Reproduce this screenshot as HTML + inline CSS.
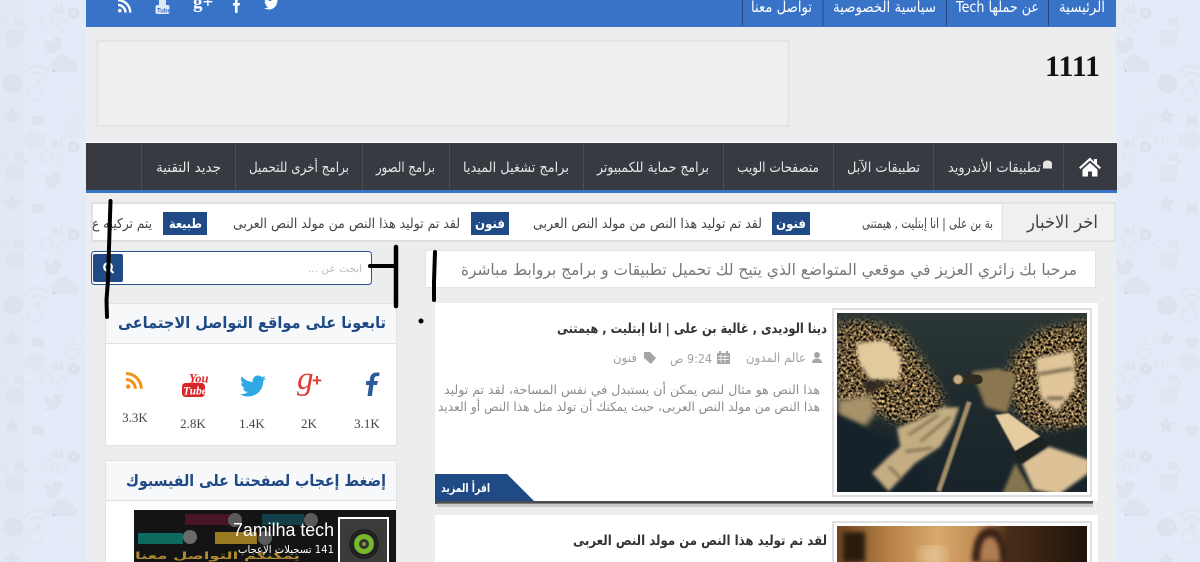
<!DOCTYPE html>
<html lang="ar"><head><meta charset="utf-8"><title>1111</title>
<style>
html,body{margin:0;padding:0;width:1200px;height:562px;overflow:hidden;background:#e3ebf7}
svg{display:block;position:absolute;left:0;top:0}
text{font-family:"DejaVu Sans","Liberation Sans",sans-serif}
.r{direction:rtl;text-anchor:start}
.top{fill:#fff;font-size:15px}
.nav{fill:#e6e6e6;font-size:14px}
.tk{fill:#444;font-size:13.500px}
.tag{fill:#fff;font-size:13px;font-weight:bold}
.wt{fill:#1f4a85;font-size:16px;font-weight:bold}
.ct{fill:#444;font-family:"Liberation Serif",serif;font-size:13px;text-anchor:middle}
.pt{fill:#333;font-size:13.500px;font-weight:bold}
.mt{fill:#a0a0a0;font-size:12.500px}
.ex{fill:#8c8c8c;font-size:12.500px}
</style></head>
<body>
<svg width="1200" height="562" viewBox="0 0 1200 562" xmlns="http://www.w3.org/2000/svg">
<defs>
<path id="tw" d="M23.95 4.57a10 10 0 0 1-2.82.78 4.96 4.96 0 0 0 2.16-2.72 9.900 9.900 0 0 1-3.13 1.19 4.920 4.920 0 0 0-8.38 4.480A13.980 13.980 0 0 1 1.640 3.160a4.920 4.920 0 0 0 1.520 6.570 4.900 4.900 0 0 1-2.230-.62v.06a4.920 4.920 0 0 0 3.950 4.830 5 5 0 0 1-2.210.08 4.940 4.940 0 0 0 4.600 3.420A9.870 9.870 0 0 1 0 19.540a13.940 13.940 0 0 0 7.550 2.210c9.050 0 14-7.500 14-13.980 0-.21 0-.42-.02-.63A9.940 9.940 0 0 0 24 4.590z"/>
<path id="fb" d="M9 24V13H6V9h3V6c0-3.500 2-5.500 5-5.500 1.500 0 3 .2 3 .2v3.400h-1.700C13.600 4.100 13 5.200 13 6.300V9h3.700l-.6 4H13v11z"/>
<g id="rss"><circle cx="3.200" cy="20.800" r="3.200"/><path d="M0 8.500v4.300c6.200 0 11.200 5 11.200 11.200h4.300C15.500 15.400 8.600 8.500 0 8.500z"/><path d="M0 0v4.300C10.900 4.300 19.700 13.100 19.700 24H24C24 10.700 13.300 0 0 0z"/></g>
<path id="cloud" d="M4 18a6 6 0 0 1 1-11.500A8 8 0 0 1 19 4a6.500 6.500 0 0 1 6 6 4.200 4.200 0 0 1 0 8z"/>
<path id="star" d="M9 0l2.600 6.200 6.400.5-4.900 4.200 1.500 6.600L9 14l-5.600 3.500 1.500-6.600L0 6.700l6.400-.5z"/>
<g id="bars"><rect x="0" y="6" width="2" height="6"/><rect x="3" y="3" width="2" height="9"/><rect x="6" y="5" width="2" height="7"/><rect x="9" y="0" width="2" height="12"/></g>
<g id="comp"><circle cx="6" cy="6" r="6"/><path d="M9 3L7 7 3 9l2-4z" fill="#e3ebf7"/></g>
<path id="heart" d="M6 10.500C2 7.500 0 5.500 0 3.200A3 3 0 0 1 6 2a3 3 0 0 1 6 1.200c0 2.300-2 4.300-6 7.300z"/>
<g id="bub"><ellipse cx="10" cy="9.500" rx="10" ry="9.500"/><circle cx="6" cy="9.500" r="1" fill="#e3ebf7"/><circle cx="10" cy="9.500" r="1" fill="#e3ebf7"/><circle cx="14" cy="9.500" r="1" fill="#e3ebf7"/></g>
<g id="patA0">
<use href="#bars" x="52" y="2" fill="#d9e1ec"/>
<use href="#comp" x="67.500" y="7" fill="#d6dee8"/>
<use href="#tw" transform="translate(43 35) scale(.85)" fill="#d9e1ec"/>
<use href="#cloud" x="50" y="54" fill="#d9e2ed"/>
<circle cx="47" cy="22" r="6" fill="none" stroke="#dde5f1" stroke-width="2"/><circle cx="62" cy="25" r="5" fill="none" stroke="#dde5f1" stroke-width="2"/>
<circle cx="54" cy="71" r=".8" fill="#6ea0dc"/>
<rect x="60" y="88" width="11" height="12" fill="none" stroke="#dbe3ee"/>
</g>
<g id="patA1">
<circle cx="64" cy="120" r="4" fill="none" stroke="#dbe3ee"/>
<circle cx="78" cy="118" r="5" fill="none" stroke="#dbe3ee"/>
<use href="#heart" x="66" y="127" fill="none" stroke="#d9e1ec"/>
<use href="#bars" x="52" y="136" fill="#d9e1ec"/>
<use href="#comp" x="67.500" y="141" fill="#d6dee8"/>
<use href="#tw" transform="translate(43 170) scale(.85)" fill="#d9e1ec"/>
<circle cx="47" cy="157" r="6" fill="none" stroke="#dde5f1" stroke-width="2"/><circle cx="62" cy="160" r="5" fill="none" stroke="#dde5f1" stroke-width="2"/>
</g>
<g id="patB0">
<rect x="6" y="30" width="17" height="17" rx="4" fill="#dbe3ee"/>
<circle cx="4" cy="22" r="3.500" fill="none" stroke="#dbe3ee"/>
<rect x="14" y="18" width="10" height="8" fill="#dbe3ee"/>
<path d="M26 72a14 14 0 0 1 23 0M30 77a9 9 0 0 1 15 0" stroke="#dbe3ee" stroke-width="2.500" fill="none"/><circle cx="38" cy="82" r="3" fill="#dbe3ee"/>
<circle cx="35" cy="93" r="7" fill="none" stroke="#dbe3ee" stroke-width="1.500"/>
<use href="#bub" x="3" y="74" fill="#d6dfea"/>
<path d="M28 25q-5 2-5 6" stroke="#d9e1ec" stroke-width="2" fill="none"/>
</g>
<g id="patB1">
<use href="#star" x="3" y="107" fill="#d7dfea"/>
<rect x="32" y="116" width="12" height="9" rx="1" fill="#d9e1ec"/>
<path d="M2 134v12M8 134v12M14 134v12" stroke="#dde5f0" stroke-width="2"/>
<ellipse cx="35" cy="140" rx="11" ry="9" fill="#dde5f0"/>
<rect x="6" y="165" width="17" height="17" rx="4" fill="#dbe3ee"/>
<circle cx="4" cy="157" r="3.500" fill="none" stroke="#dbe3ee"/>
<rect x="14" y="153" width="10" height="8" fill="#dbe3ee"/>
<path d="M28 160q-5 2-5 6" stroke="#d9e1ec" stroke-width="2" fill="none"/>
<use href="#star" x="3" y="194" fill="#d7dfea"/>
<rect x="32" y="204" width="12" height="9" rx="1" fill="#d9e1ec"/>
</g>
<g id="leftA"><use href="#patA0"/><use href="#patA1"/><use href="#patA0" y="222"/><use href="#patA1" y="222"/><use href="#patA0" y="444"/></g>
<g id="leftB"><use href="#patB0"/><use href="#patB1"/><use href="#patB0" y="222"/><use href="#patB1" y="222"/><use href="#patB0" y="444"/>
<path transform="translate(3 551)" d="M9 0l2.600 6.200 6.400.5-4.800 4.300H4.800L0 6.700l6.400-.5z" fill="#d7dfea"/></g>
<filter id="b2" x="-20%" y="-20%" width="140%" height="140%"><feGaussianBlur stdDeviation="9"/></filter>
<filter id="b1" x="-20%" y="-20%" width="140%" height="140%"><feGaussianBlur stdDeviation="4.500"/></filter>
<filter id="pb" x="-20%" y="-20%" width="140%" height="140%"><feGaussianBlur stdDeviation="2"/></filter>
<filter id="curl" x="-5%" y="-5%" width="110%" height="110%" color-interpolation-filters="sRGB">
<feTurbulence type="fractalNoise" baseFrequency=".13" numOctaves="2" seed="7"/>
<feColorMatrix type="matrix" values="2 0 0 0 -.6  1.700 0 0 0 -.52  1.100 0 0 0 -.33  0 0 0 0 1" result="c"/>
<feGaussianBlur in="SourceAlpha" stdDeviation="14" result="m"/>
<feComposite in="c" in2="m" operator="in"/>
</filter>
<clipPath id="c1"><rect x="35" y="38" width="750" height="539"/></clipPath>
<clipPath id="tick"><rect x="92" y="204" width="902" height="36"/></clipPath>
<linearGradient id="p2" x1="0" x2="1"><stop offset="0" stop-color="#6d4520"/><stop offset=".2" stop-color="#b57f45"/><stop offset=".4" stop-color="#d9a86c"/><stop offset=".56" stop-color="#c08c55"/><stop offset=".68" stop-color="#4a2f1a"/><stop offset="1" stop-color="#1e1209"/></linearGradient>
<linearGradient id="ph" x1="0" x2="0" y1="0" y2="1"><stop offset="0" stop-color="#2c3836"/><stop offset=".45" stop-color="#1f2b2e"/><stop offset="1" stop-color="#18232a"/></linearGradient>
</defs>

<!-- page pattern -->
<rect width="1200" height="562" fill="#e4ebf8"/>
<rect x="0" width="24" height="562" fill="#e2e9f5"/>
<g opacity=".62">
<use href="#leftA"/><use href="#leftB"/>
<use href="#leftA" x="1072"/><use href="#leftB" x="1154"/>
</g>

<!-- page -->
<rect x="86" y="0" width="1030" height="562" fill="#ecedef"/>
<rect x="86" y="0" width="1030" height="27" fill="#3873c8"/>
<g fill="#1f4a85"><rect x="742" width="1" height="26"/><rect x="822.500" width="1" height="26"/><rect x="946" width="1" height="26"/><rect x="1048" width="1" height="26"/></g>
<text class="r top" x="1105" y="12" textLength="46" lengthAdjust="spacingAndGlyphs">الرئيسية</text>
<text class="r top" x="1039" y="12" textLength="83" lengthAdjust="spacingAndGlyphs">عن حملها Tech</text>
<text class="r top" x="936" y="12" textLength="103" lengthAdjust="spacingAndGlyphs">سياسية الخصوصية</text>
<text class="r top" x="812" y="12" textLength="61" lengthAdjust="spacingAndGlyphs">تواصل معنا</text>
<!-- top icons -->
<g fill="#fff">
<use href="#tw" transform="translate(264 -4) scale(.62)"/>
<use href="#fb" transform="translate(229 -3) scale(.66)"/>
<text x="193" y="8" style="font:bold 19px 'Liberation Serif',serif">g+</text>
<rect x="155.500" y="5" width="14" height="9" rx="2" fill="#dfe8f6"/><rect x="159" y="-1" width="7" height="6" fill="#dfe8f6"/>
<use href="#rss" transform="translate(118 -1) scale(.56)"/>
</g>
<text x="157" y="12.500" style="font:bold 6px 'Liberation Sans',sans-serif" fill="#3873c8">Tube</text>

<!-- header -->
<rect x="97.500" y="41" width="691" height="85" fill="#eeeff1" stroke="#e3e4e6" stroke-width="2"/>
<text x="1045" y="76" style="font:bold 30px 'Liberation Serif',serif" fill="#111">1111</text>

<!-- nav -->
<rect x="86" y="142" width="1031" height="1" fill="#fff"/>
<rect x="86" y="143" width="1031" height="47" fill="#373b41"/>
<rect x="86" y="190" width="1031" height="3" fill="#3873c8"/>
<g fill="#4a4e53"><rect x="141" y="144" width="1" height="46"/><rect x="235" y="144" width="1" height="46"/><rect x="362" y="144" width="1" height="46"/><rect x="449" y="144" width="1" height="46"/><rect x="583" y="144" width="1" height="46"/><rect x="723" y="144" width="1" height="46"/><rect x="833" y="144" width="1" height="46"/><rect x="933" y="144" width="1" height="46"/><rect x="1063" y="144" width="1" height="46"/></g>
<text class="r nav" x="221" y="172" textLength="65" lengthAdjust="spacingAndGlyphs">جديد التقنية</text>
<text class="r nav" x="349" y="172" textLength="100" lengthAdjust="spacingAndGlyphs">برامج أخرى للتحميل</text>
<text class="r nav" x="435" y="172" textLength="59" lengthAdjust="spacingAndGlyphs">برامج الصور</text>
<text class="r nav" x="569" y="172" textLength="106" lengthAdjust="spacingAndGlyphs">برامج تشغيل الميديا</text>
<text class="r nav" x="709" y="172" textLength="112" lengthAdjust="spacingAndGlyphs">برامج حماية للكمبيوتر</text>
<text class="r nav" x="819" y="172" textLength="82" lengthAdjust="spacingAndGlyphs">متصفحات الويب</text>
<text class="r nav" x="920" y="172" textLength="73" lengthAdjust="spacingAndGlyphs">تطبيقات الآبل</text>
<text class="r nav" x="1041" y="172" textLength="93" lengthAdjust="spacingAndGlyphs">تطبيقات الأندرويد</text>
<path d="M1043 164c0-2.500 2-3.500 4.500-3.500s4.500 1 4.500 3.500v4.500h-9z" fill="#e6e6e6"/>
<!-- home -->
<path d="M1090 157.500l-11 10 1.500 1.500 9.500-8.500 9.500 8.500 1.500-1.500-4-3.600V159h-3v2.700z" fill="#fff"/>
<path d="M1082.500 169.500l7.500-6.800 7.500 6.800v7h-5.500v-5h-4v5h-5.500z" fill="#fff"/>

<!-- ticker -->
<rect x="92" y="203" width="1023" height="38" fill="#fff" stroke="#dfe0e2" stroke-width="2"/>
<rect x="1002" y="203" width="113" height="38" fill="#f0f0f1" stroke="#dfe0e2" stroke-width="1"/>
<text class="r" x="1098" y="228" textLength="71" lengthAdjust="spacingAndGlyphs" style="font-size:18px" fill="#444">اخر الاخبار</text>
<g clip-path="url(#tick)">
<text class="r tk" x="993" y="228" textLength="131" lengthAdjust="spacingAndGlyphs">بة بن على | انا إبتليت , هيمتنى</text>
<rect x="772" y="212" width="38" height="23" fill="#1f4a85"/><text class="r tag" x="806" y="228" textLength="30" lengthAdjust="spacingAndGlyphs">فنون</text>
<text class="r tk" x="762" y="228" textLength="229" lengthAdjust="spacingAndGlyphs">لقد تم توليد هذا النص من مولد النص العربى</text>
<rect x="471" y="212" width="38" height="23" fill="#1f4a85"/><text class="r tag" x="505" y="228" textLength="30" lengthAdjust="spacingAndGlyphs">فنون</text>
<text class="r tk" x="460" y="228" textLength="227" lengthAdjust="spacingAndGlyphs">لقد تم توليد هذا النص من مولد النص العربى</text>
<rect x="163" y="212" width="44" height="23" fill="#1f4a85"/><text class="r tag" x="202" y="228" textLength="33" lengthAdjust="spacingAndGlyphs">طبيعة</text>
<text class="r tk" x="152" y="228" textLength="60" lengthAdjust="spacingAndGlyphs">يتم تركيبه ع</text>
</g>

<!-- welcome -->
<rect x="425.500" y="250.500" width="670" height="37" fill="#fff" stroke="#e2e3e5"/>
<text class="r" x="1077" y="275" textLength="616" lengthAdjust="spacingAndGlyphs" style="font-size:16px" fill="#777">مرحبا بك زائري العزيز في موقعي المتواضع الذي يتيح لك تحميل تطبيقات و برامج بروابط مباشرة</text>

<!-- search -->
<rect x="91.500" y="251.500" width="280" height="33" rx="3" fill="#fff" stroke="#2a5694"/>
<rect x="93" y="254" width="30" height="28" rx="2" fill="#1f4a85"/>
<circle cx="108" cy="267" r="3.800" fill="none" stroke="#fff" stroke-width="2.200"/><path d="M110.500 270l3 3" stroke="#fff" stroke-width="2.200"/>
<text class="r" x="362" y="272" textLength="54" lengthAdjust="spacingAndGlyphs" style="font-size:10px" fill="#bbb">ابحث عن ...</text>

<!-- social widget -->
<rect x="105.500" y="303.500" width="291" height="142" fill="#fff" stroke="#e0e1e3"/>
<rect x="106" y="304" width="290" height="39" fill="#f7f8f9"/><rect x="106" y="343" width="290" height="1" fill="#e0e1e3"/>
<text class="r wt" x="386" y="328" textLength="268" lengthAdjust="spacingAndGlyphs">تابعونا على مواقع التواصل الاجتماعى</text>
<use href="#fb" transform="translate(357 372) skewX(-8) translate(4 0) scale(1.100 1)" fill="#2d5a9a"/>
<text x="297" y="389" style="font:italic 33px 'Liberation Serif',serif" fill="#dd3b33">g</text><text x="312" y="386" style="font:bold 17px 'Liberation Sans',sans-serif" fill="#dd3b33">+</text>
<use href="#tw" transform="translate(240 373) scale(1.080)" fill="#2ea9e6"/>
<text x="189" y="382.500" style="font:italic bold 12.500px 'Liberation Serif',serif" fill="#d9252a">You</text>
<rect x="182" y="383" width="23" height="14" rx="3.500" fill="#d9252a"/><text x="183" y="394.500" style="font:italic bold 11.500px 'Liberation Serif',serif" fill="#fff">Tube</text>
<use href="#rss" transform="translate(126 372) scale(.7)" fill="#f39019"/>
<text class="ct" x="367" y="428">3.1K</text><text class="ct" x="309" y="428">2K</text><text class="ct" x="252" y="428">1.4K</text><text class="ct" x="193" y="428">2.8K</text><text class="ct" x="135" y="422">3.3K</text>

<!-- facebook widget -->
<rect x="105" y="460" width="292" height="102" fill="#e0e1e3"/>
<rect x="106" y="461" width="290" height="101" fill="#fff"/>
<rect x="106" y="461" width="290" height="39" fill="#f7f8f9"/><rect x="106" y="500" width="290" height="1" fill="#e0e1e3"/>
<text class="r wt" x="386" y="486" textLength="260" lengthAdjust="spacingAndGlyphs">إضغط إعجاب لصفحتنا على الفيسبوك</text>
<rect x="134" y="510" width="262" height="52" fill="#141414"/>
<rect x="185" y="514" width="45" height="11" fill="#4a1428"/><circle cx="235" cy="520" r="7" fill="#5a5a5a"/>
<rect x="262" y="514" width="42" height="11" fill="#123f48"/><circle cx="311" cy="520" r="7" fill="#5a5a5a"/>
<rect x="138" y="533" width="45" height="11" fill="#0e6a5c"/><circle cx="190" cy="537" r="7" fill="#6a6a6a"/>
<rect x="215" y="532" width="42" height="12" fill="#9a7a20"/><circle cx="265" cy="538" r="7" fill="#5a5a5a"/>
<text class="r" x="300" y="559" textLength="165" lengthAdjust="spacingAndGlyphs" style="font-size:10px;font-weight:bold" fill="#b08a30">يمكنكم التواصل معنا</text>
<text x="233" y="536" textLength="101" lengthAdjust="spacingAndGlyphs" style="font:18px 'Liberation Sans',sans-serif" fill="#fff">7amilha tech</text>
<text class="r" x="334" y="553" textLength="96" lengthAdjust="spacingAndGlyphs" style="font-size:10.500px" fill="#fff">141 تسجيلات الإعجاب</text>
<rect x="338" y="517" width="51" height="45" fill="#fff"/><rect x="340" y="519" width="47" height="43" fill="#3a3c3a"/>
<circle cx="364" cy="544" r="15" fill="#222"/><circle cx="364" cy="544" r="10" fill="#76b82a"/><circle cx="364" cy="544" r="5" fill="#333"/><circle cx="364" cy="544" r="2" fill="#7a9a3a"/>

<!-- post 1 -->
<path d="M435 501h658v3H435z" fill="#4a4b4d"/>
<rect x="437" y="503" width="656" height="4" fill="#a8a9ab" opacity=".5"/>
<rect x="435" y="303" width="663" height="198" fill="#fff"/>
<rect x="833" y="309" width="258" height="187" fill="#fff" stroke="#dedfe1" stroke-width="2"/>
<svg x="837" y="313" width="250" height="179" viewBox="35 38 750 539" preserveAspectRatio="none">
<g clip-path="url(#c1)">
<rect x="35" y="38" width="750" height="539" fill="url(#ph)"/>
<path d="M30 70L120 60 230 90 300 190 345 270 360 330 300 380 220 370 150 340 30 300z" filter="url(#curl)"/>
<path d="M540 230L570 160 640 90 790 60 790 400 700 385 620 385 560 320z" filter="url(#curl)"/>
<path d="M92 130L180 120 228 170 222 240 135 238 100 185z" fill="#e2ca9f" filter="url(#b1)"/>
<path d="M110 240L195 245 130 285z" fill="#302c22" filter="url(#b1)"/>
<path d="M38 300L140 285 150 340 120 380 38 345z" fill="#a8926a" filter="url(#b2)"/>
<path d="M30 340L120 385 220 435 180 480 295 510 295 585 30 585z" fill="#18232a" filter="url(#b1)"/>
<path d="M215 385L300 350 355 322 402 322 380 380 345 440 270 490 190 575 140 520 185 475 225 440z" fill="#c4ad83" filter="url(#b1)"/>
<path d="M250 405L340 345M285 425L375 350M240 455L320 445M190 500L230 540" stroke="#6a5b40" stroke-width="6" fill="none" filter="url(#b1)"/>
<path d="M432 305L340 575" stroke="#a08b66" stroke-width="15" filter="url(#pb)"/>
<path d="M630 175L745 150 752 260 695 335 645 290z" fill="#e0c69a" filter="url(#b1)"/>
<path d="M640 222L740 205M665 295L715 295" stroke="#4a3e2c" stroke-width="7" fill="none" filter="url(#b1)"/>
<path d="M440 215L520 205 575 225 545 340 480 320z" fill="#8a7650" filter="url(#b1)"/>
<rect x="382" y="224" width="90" height="28" rx="14" fill="#2e2c22"/><circle cx="398" cy="238" r="14" fill="#c9ad82" filter="url(#pb)"/>
<path d="M510 345L550 340 645 410 570 455z" fill="#e6cda0" filter="url(#pb)"/>
<path d="M700 400L790 375 790 470 665 440z" fill="#1b2528" filter="url(#b1)"/>
<path d="M590 490L670 440 790 480 790 520 700 585 625 570z" fill="#dcc296" filter="url(#b1)"/>
<path d="M560 460L650 408 667 438 590 492z" fill="#1a2224" filter="url(#pb)"/>
<path d="M530 585L570 490 625 585z" fill="#85744f" filter="url(#b1)"/>
</g>
</svg>
<polygon points="435,474 507,474 534,501 435,501" fill="#1f4a85"/>
<text class="r" x="490" y="492" textLength="49" lengthAdjust="spacingAndGlyphs" style="font-size:12px;font-weight:bold" fill="#fff">اقرأ المزيد</text>
<text class="r pt" x="827" y="333" textLength="270" lengthAdjust="spacingAndGlyphs">دينا الوديدى , غالية بن على | انا إبتليت , هيمتنى</text>
<!-- meta -->
<g fill="#a5a5a5">
<circle cx="817" cy="355" r="3"/><path d="M812 363c0-6 10-6 10 0z"/>
<rect x="717" y="353" width="13" height="11" rx="1"/><rect x="719" y="351" width="2" height="3"/><rect x="726" y="351" width="2" height="3"/>
<path d="M644 352h6l6 6-5 6-7-6z"/>
</g>
<path d="M718 356.500h11M718 359.500h11M721 354v9M725 354v9" stroke="#fff" stroke-width=".7"/>
<text class="r mt" x="806" y="362" textLength="60" lengthAdjust="spacingAndGlyphs">عالم المدون</text>
<text class="r mt" x="712" y="363" textLength="42" lengthAdjust="spacingAndGlyphs">9:24 ص</text>
<text class="r mt" x="637" y="362" textLength="24" lengthAdjust="spacingAndGlyphs">فنون</text>
<text class="r ex" x="820" y="394" textLength="376" lengthAdjust="spacingAndGlyphs">هذا النص هو مثال لنص يمكن أن يستبدل في نفس المساحة، لقد تم توليد</text>
<text class="r ex" x="820" y="411" textLength="382" lengthAdjust="spacingAndGlyphs">هذا النص من مولد النص العربى، حيث يمكنك أن تولد مثل هذا النص أو العديد</text>

<!-- post 2 -->
<rect x="435" y="515" width="663" height="47" fill="#fff"/>
<rect x="832" y="521" width="260" height="41" fill="#dedfe1"/><rect x="834" y="523" width="256" height="39" fill="#fff"/>
<rect x="837" y="526" width="250" height="36" fill="url(#p2)"/>
<rect x="843" y="532" width="22" height="30" fill="#2a1a0c" filter="url(#pb)"/>
<path d="M920 562C920 552 926 548 932 548S944 552 944 562z" fill="#f3e2c0" filter="url(#b2)"/>
<path d="M972 562C972 538 980 528 990 528S1008 540 1008 562z" fill="#3a2412" filter="url(#pb)"/>
<path d="M980 562C980 545 984 537 990 537S1000 545 1000 562z" fill="#b07d52" filter="url(#pb)"/>
<text class="r pt" x="827" y="545" textLength="254" lengthAdjust="spacingAndGlyphs">لقد تم توليد هذا النص من مولد النص العربى</text>

<!-- hand-drawn marks -->
<g stroke="#000" fill="none" stroke-linecap="round">
<path d="M110.500 201L109 248 108 280 106.500 300 107 317" stroke-width="4"/>
<path d="M396 247L396 306" stroke-width="4.500"/>
<path d="M370 266L395 266" stroke-width="4"/>
<path d="M435 252L434 282 434 300" stroke-width="4"/>
</g>
<circle cx="421" cy="321" r="2.500" fill="#000"/>
</svg>
</body></html>
